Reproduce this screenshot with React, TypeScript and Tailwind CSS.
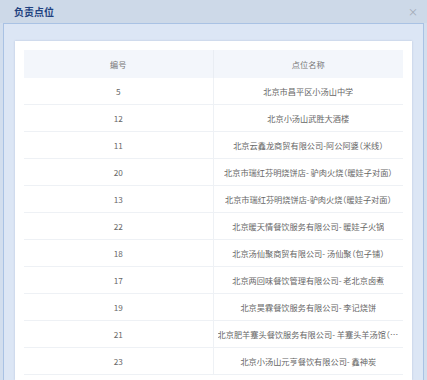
import React from 'react';

const rows = [
  { id: '5', name: '北京市昌平区小汤山中学' },
  { id: '12', name: '北京小汤山武胜大酒楼' },
  { id: '11', name: '北京云鑫龙商贸有限公司-阿公阿婆（米线）' },
  { id: '20', name: '北京市瑞红芬明烧饼店- 驴肉火烧（暖娃子对面）' },
  { id: '13', name: '北京市瑞红芬明烧饼店-驴肉火烧（暖娃子对面）' },
  { id: '22', name: '北京暖天情餐饮服务有限公司- 暖娃子火锅' },
  { id: '18', name: '北京汤仙聚商贸有限公司- 汤仙聚（包子铺）' },
  { id: '17', name: '北京两回味餐饮管理有限公司- 老北京卤煮' },
  { id: '19', name: '北京昊霖餐饮服务有限公司- 李记烧饼' },
  { id: '21', name: '北京肥羊蹇头餐饮服务有限公司- 羊蹇头羊汤馆（以前的老店）' },
  { id: '23', name: '北京小汤山元亨餐饮有限公司- 鑫神炭' },
];

export default function App() {
  return (
    <div
      className="w-[427px] h-[380px] overflow-hidden bg-[#d2deee] flex flex-col"
      style={{ fontFamily: '"Noto Sans CJK SC", "Noto Sans", sans-serif' }}
    >
      {/* Title bar */}
      <div className="h-[23px] shrink-0 flex items-center justify-between pl-[14px] pr-[9px] bg-[#cdd9e8]">
        <span className="text-[10px] font-bold text-[#1f4280] leading-none">负责点位</span>
        <span className="text-[10px] text-[#a0a8b4] leading-none">×</span>
      </div>

      {/* Body */}
      <div className="flex-1 mx-[3px] border border-b-0 border-[#a9c2e4] bg-[#dce6f5] px-[11px] pt-[17px] min-h-0">
        <div className="h-full bg-white p-[9px] shadow-[0_0_2px_rgba(120,140,170,0.35)]">
          <div className="w-full text-[8.2px] leading-[12px] [font-feature-settings:'halt']">
            {/* Header */}
            <div className="grid grid-cols-2 h-[28px] bg-[#f3f6fb] text-[#777]">
              <div className="flex items-center justify-center border-r border-[#e9edf3]">编号</div>
              <div className="flex items-center justify-center">点位名称</div>
            </div>
            {rows.map((r) => (
              <div key={r.id} className="grid grid-cols-2 h-[27px] border-b border-[#eef1f5] text-[#666]">
                <div className="flex items-center justify-center border-r border-[#eef1f5]">{r.id}</div>
                <div className="flex items-center justify-center px-[4px] min-w-0">
                  <span className="truncate">{r.name}</span>
                </div>
              </div>
            ))}
          </div>
        </div>
      </div>
    </div>
  );
}
